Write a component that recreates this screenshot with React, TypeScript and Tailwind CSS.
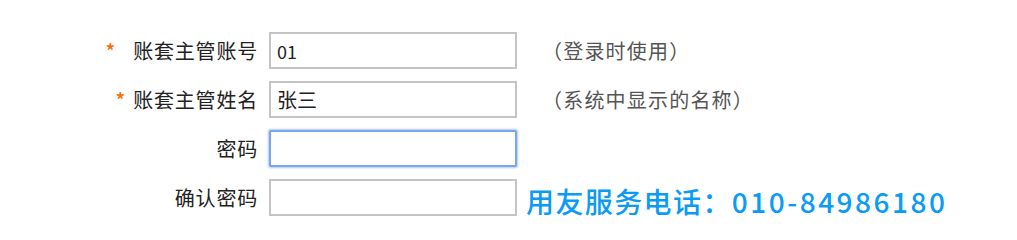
import React from "react";

const font = { fontFamily: '"Noto Sans CJK SC", "Microsoft YaHei", sans-serif' };

function Row({
  label,
  star,
  starGap,
  value,
  valueSize,
  focused,
  hint,
  extra,
}: {
  label: string;
  star?: boolean;
  starGap?: string;
  value?: string;
  valueSize?: string;
  focused?: boolean;
  hint?: string;
  extra?: React.ReactNode;
}) {
  return (
    <div className="flex items-center h-[37px]">
      <div className="w-[258px] flex items-center justify-end text-[20px] text-[#222] leading-none">
        {star && <span className={`text-[#ff6a00] text-[20px] font-medium ${starGap}`}>*</span>}
        <span className="tracking-[0.8px]">{label}</span>
      </div>
      <div
        className={`ml-[11px] w-[248px] h-[37px] bg-white flex items-center px-[6px] ${
          focused
            ? "border-2 border-[#7aa6ec] shadow-[0_0_2px_1px_rgba(122,166,236,0.6)] rounded-[2px]"
            : "border-2 border-[#c4c4c4]"
        }`}
      >
        <span className={`${valueSize} text-[#222] leading-none`}>{value}</span>
      </div>
      {hint && (
        <div className="ml-[25px] text-[20px] tracking-[1.2px] text-[#555] leading-none">{hint}</div>
      )}
      {extra}
    </div>
  );
}

export default function App() {
  return (
    <div className="w-[1017px] h-[227px] bg-white pt-[32px] flex flex-col gap-[12px]" style={font}>
      <Row label="账套主管账号" star starGap="mr-[18px]" value="01" valueSize="text-[18px]" hint="（登录时使用）" />
      <Row label="账套主管姓名" star starGap="mr-[8px]" value="张三" valueSize="text-[20px]" hint="（系统中显示的名称）" />
      <Row label="密码" focused />
      <Row
        label="确认密码"
        extra={
          <div className="ml-[9px] mt-[7px] text-[28px] font-medium text-[#0a9bf4] leading-none flex items-center">
            <span className="tracking-[1.4px]">用友服务电话：</span>
            <span className="tracking-[2.5px]">010-84986180</span>
          </div>
        }
      />
    </div>
  );
}
